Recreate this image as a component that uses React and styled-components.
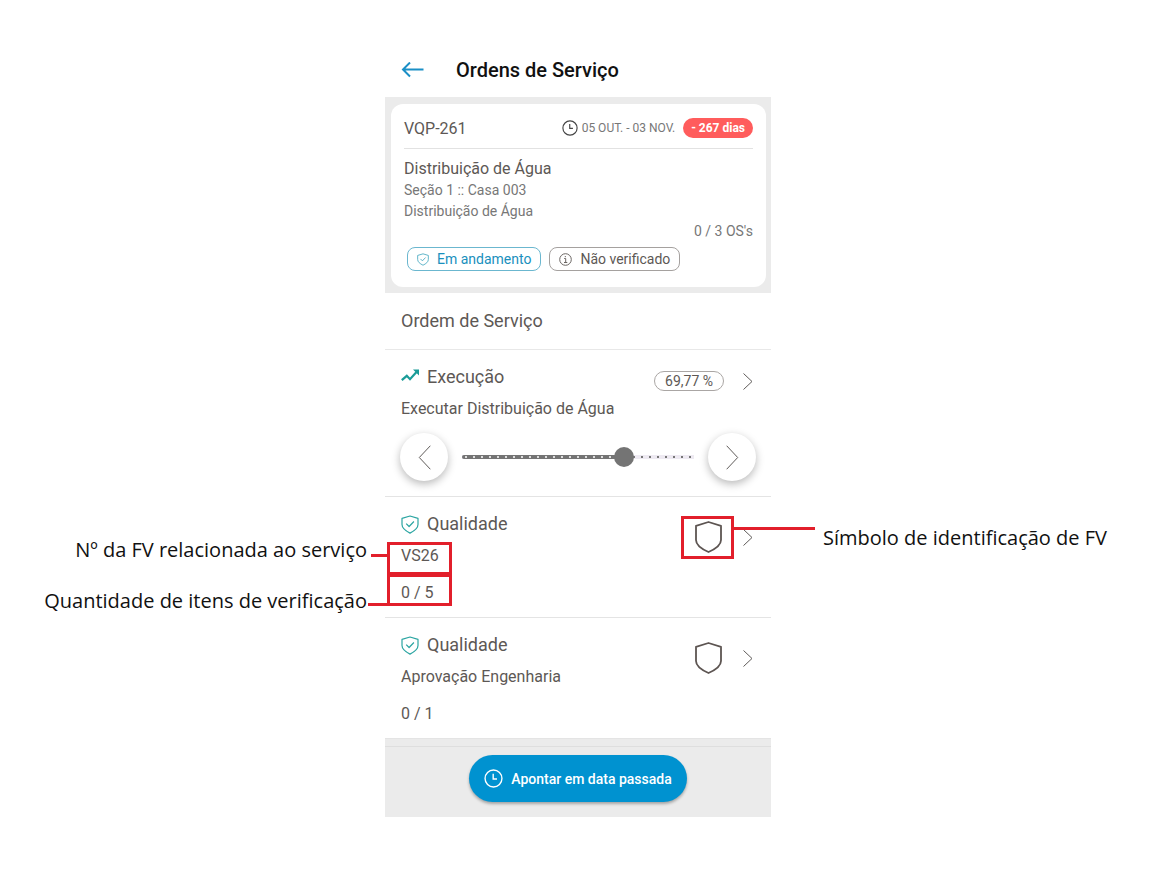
import React, { useState } from 'react';
import styled, { createGlobalStyle, css } from 'styled-components';

const GlobalStyle = createGlobalStyle`
  :root {
    --color-accent: #0092d0;
    --color-text: #5d5855;
    --color-muted: #777;
    --color-mark: #e21f2b;
    --color-shade: #ebebeb;
  }
  * {
    box-sizing: border-box;
  }
  body {
    margin: 0;
    background: white;
    color: var(--color-text);
    font-family: Roboto, sans-serif;
  }
  button {
    font-family: inherit;
    border: none;
    padding: 0;
    background: none;
    cursor: pointer;
  }
  svg {
    display: block;
    flex: none;
  }
`;

const Page = styled.div`
  display: grid;
  grid-template-columns: minmax(0, 386px);
  justify-content: center;
  padding: 43px 9px 59px 0;
`;

const Header = styled.header`
  display: flex;
  align-items: center;
  gap: 32px;
  height: 54px;
  padding: 0 16px;
`;
const Title = styled.h1`
  margin: 0;
  color: #111;
  font-size: 20px;
  font-weight: 500;
`;

const Summary = styled.section`
  background: var(--color-shade);
  padding: 7px 5px 6px 6px;
`;
const Card = styled.div`
  background: white;
  border-radius: 12px;
  padding: 4px 13px 16px;
`;
const CardHead = styled.div`
  display: flex;
  align-items: center;
  height: 41px;
  margin-bottom: 9px;
  border-bottom: 1px solid #e2e2e2;
`;
const Code = styled.span`
  flex: 1;
  font-size: 16px;
`;
const Period = styled.span`
  display: flex;
  align-items: center;
  gap: 4px;
  color: var(--color-muted);
  font-size: 12px;
`;
const Late = styled.span`
  margin-left: 8px;
  padding: 0 8px;
  border-radius: 10px;
  background: #ff5c5c;
  color: white;
  font-size: 12px;
  font-weight: 700;
  line-height: 20px;
`;
const Service = styled.h2`
  margin: 0;
  font-size: 16px;
  font-weight: 400;
  line-height: 22px;
`;
const Place = styled.p`
  margin: 0;
  color: var(--color-muted);
  font-size: 14px;
  line-height: 21px;
`;
const Total = styled.p`
  margin: 0;
  color: var(--color-muted);
  font-size: 14px;
  line-height: 18px;
  text-align: right;
`;
const Tags = styled.div`
  display: flex;
  gap: 8px;
  margin: 7px 3px 0;
`;
const Tag = styled.span`
  display: flex;
  align-items: center;
  gap: 8px;
  height: 24px;
  padding: 0 9px;
  border: 1px solid ${props => (props.$active ? '#6bb7cf' : '#a5a19f')};
  border-radius: 8px;
  color: ${props => (props.$active ? '#1990bd' : 'var(--color-text)')};
  font-size: 14px;
`;

const GroupTitle = styled.h2`
  margin: 0;
  padding: 0 16px;
  border-bottom: 1px solid #e8e8e8;
  font-size: 18px;
  font-weight: 400;
  line-height: 56px;
`;
const Item = styled.section`
  display: grid;
  grid-template-columns: 1fr auto;
  padding: 16px 16px 12px;
  border-bottom: 1px solid #e4e4e4;
`;
const ItemTitle = styled.h3`
  display: flex;
  align-items: center;
  gap: 8px;
  margin: 0;
  font-size: 18px;
  font-weight: 400;
  line-height: 22px;
`;
const Line = styled.p`
  margin: ${props => (props.$count ? '13px' : '9px')} 0 0;
  font-size: 16px;
  line-height: 24px;
`;
const Side = styled.div`
  display: flex;
  align-items: center;
  align-self: start;
  gap: ${props => props.$gap};
  height: ${props => props.$height};
  padding-right: 2px;
`;
const Percent = styled.span`
  padding: 0 10px;
  border: 1px solid #aaa6a4;
  border-radius: 10px;
  font-size: 14px;
  line-height: 18px;
`;

const Progress = styled.div`
  grid-column: 1 / -1;
  display: flex;
  align-items: center;
  gap: 14px;
  margin: 0 -1px;
  padding: 12px 0 3px;
`;
const RoundButton = styled.button`
  display: grid;
  place-items: center;
  width: 48px;
  height: 48px;
  border-radius: 50%;
  background: white;
  box-shadow: 0 3px 8px rgba(0, 0, 0, 0.28);
`;
const Track = styled.div`
  flex: 1;
  display: grid;
  align-items: center;
  background: radial-gradient(circle, #777 1px, transparent 1px) 0 center / 8px 4px repeat-x,
    linear-gradient(#eeeaf2, #eeeaf2) center / 100% 4px no-repeat;
  &::before {
    content: '';
    grid-area: 1 / 1;
    width: var(--done);
    height: 4px;
    border-radius: 2px;
    background: radial-gradient(circle, #ddd 1px, transparent 1px) 0 center / 8px 4px repeat-x #747474;
  }
`;
const Range = styled.input`
  grid-area: 1 / 1;
  appearance: none;
  width: calc(100% + 20px);
  height: 20px;
  margin: 0 -10px;
  background: none;
  cursor: pointer;
  &::-webkit-slider-thumb {
    appearance: none;
    width: 20px;
    height: 20px;
    border-radius: 50%;
    background: #747474;
  }
`;

const Marked = styled.span`
  position: relative;
  display: inline-block;
`;
const Frame = styled.span`
  position: absolute;
  border: 3px solid var(--color-mark);
  ${props => props.$kind === 'symbol' && css`
    inset: -5px -12px -6px -14px;
  `}
  ${props => props.$kind === 'number' && css`
    width: 65px;
    top: -2px;
    bottom: -7px;
    left: -14px;
  `}
  ${props => props.$kind === 'amount' && css`
    width: 65px;
    top: -7px;
    bottom: -1px;
    left: -14px;
  `}
`;
const Note = styled.span`
  position: absolute;
  display: flex;
  color: #111;
  font-family: 'Open Sans', sans-serif;
  font-size: 20px;
  line-height: 28px;
  white-space: nowrap;
  ${props => props.$kind === 'symbol' && css`
    top: 5px;
    left: 100%;
    gap: 8px;
  `}
  ${props => props.$kind === 'number' && css`
    right: 100%;
    bottom: 8px;
    gap: 4px;
  `}
  ${props => props.$kind === 'amount' && css`
    right: 100%;
    bottom: -12px;
    gap: 1px;
  `}
`;
const Lead = styled.i`
  width: ${props => props.$size};
  height: 3px;
  margin-top: ${props => props.$drop};
  background: var(--color-mark);
`;

const FooterArea = styled.footer`
  display: flow-root;
  background: var(--color-shade);
`;
const Actions = styled.div`
  display: flex;
  justify-content: center;
  margin-top: 7px;
  padding: 8px 0 15px;
  border-top: 1px solid #dedede;
`;
const MainButton = styled.button`
  display: flex;
  align-items: center;
  gap: 8px;
  height: 47px;
  padding: 0 15px;
  border-radius: 24px;
  background: var(--color-accent);
  color: white;
  font-size: 14px;
  font-weight: 500;
  box-shadow: 0 2px 3px rgba(0, 0, 0, 0.3);
`;

const BackIcon = () => (
  <svg width="23" height="16" viewBox="0 0 23 16" fill="none" stroke="#1b8fc6" strokeWidth="2">
    <path d="M22.500 7.500H2M9 .500l-7 7 7 7" />
  </svg>
);

const ClockIcon = ({ size, color }) => (
  <svg width={size} height={size} viewBox="0 0 18 18" fill="none" stroke={color} strokeWidth="1.3">
    <circle cx="9" cy="9" r="8" />
    <path d="M8.700 4.500v5h3.600" />
  </svg>
);

const CheckShield = ({ width, height, color }) => (
  <svg width={width} height={height} viewBox="0 0 18 19" fill="none" stroke={color} strokeWidth="1.2" strokeLinejoin="round">
    <path d="M9 1L17 3.400v6.100c0 3.600-3.300 6.200-8 8.600-4.700-2.400-8-5-8-8.600V3.400z" />
    <path d="M5.200 8.600l2.900 2.900 4.800-5" />
  </svg>
);

const InfoIcon = () => (
  <svg width="13" height="13" viewBox="0 0 13 13" fill="none" stroke="#6b6663">
    <circle cx="6.500" cy="6.500" r="5.800" />
    <path d="M5.200 5.500h1.500v4M5 9.500h3.300M6.300 3v1.200" />
  </svg>
);

const TrendIcon = () => (
  <svg width="18" height="16" viewBox="0 0 18 16" fill="none" stroke="#1a9c98" strokeWidth="2.200">
    <path d="M.800 11.200l5-4.400 3.200 3.400 6.500-7.200" />
    <path d="M12 .500h6v6z" fill="#1a9c98" stroke="none" />
  </svg>
);

const ShieldIcon = () => (
  <svg width="27" height="32" viewBox="0 0 27 32" fill="none" stroke="#5d5552" strokeWidth="1.800" strokeLinejoin="round">
    <path d="M13.500 1L26 4.800v14.200c0 4.800-5 8.700-12.500 12C6 27.700 1 23.800 1 19V4.800z" />
  </svg>
);

const Chevron = ({ left, width = 10, height = 17 }) => (
  <svg width={width} height={height} viewBox="0 0 10 17" fill="none" stroke="#5f5b59" preserveAspectRatio="none">
    <path d={left ? 'M9.500.500l-8.500 8 8.500 8' : 'M.500.500l8.500 8-8.500 8'} vectorEffect="non-scaling-stroke" />
  </svg>
);

function Execution() {
  const [value, setValue] = useState(69.77);
  const move = amount => setValue(Math.min(100, Math.max(0, value + amount)));

  return (
    <Item>
      <div>
        <ItemTitle><TrendIcon />Execução</ItemTitle>
        <Line>Executar Distribuição de Água</Line>
      </div>
      <Side $height="30px" $gap="19px">
        <Percent>{value.toFixed(2).replace('.', ',')} %</Percent>
        <button aria-label="Abrir execução"><Chevron /></button>
      </Side>
      <Progress>
        <RoundButton aria-label="Diminuir" onClick={() => move(-1)}>
          <Chevron left width={13} height={25} />
        </RoundButton>
        <Track style={{ '--done': `${value}%` }}>
          <Range
            type="range"
            min="0"
            max="100"
            step="any"
            aria-label="Progresso"
            value={value}
            onChange={e => setValue(Number(e.target.value))} />
        </Track>
        <RoundButton aria-label="Aumentar" onClick={() => move(1)}>
          <Chevron width={13} height={25} />
        </RoundButton>
      </Progress>
    </Item>
  );
}

function Quality({ name, count, annotated }) {
  return (
    <Item>
      <div>
        <ItemTitle><CheckShield width="18" height="19" color="#2ba5a2" />Qualidade</ItemTitle>
        <Line>
          <Marked>
            {name}
            {annotated && (
              <Frame $kind="number">
                <Note $kind="number">Nº da FV relacionada ao serviço<Lead $size="19px" $drop="18px" /></Note>
              </Frame>
            )}
          </Marked>
        </Line>
        <Line $count>
          <Marked>
            {count}
            {annotated && (
              <Frame $kind="amount">
                <Note $kind="amount">Quantidade de itens de verificação<Lead $size="22px" $drop="16px" /></Note>
              </Frame>
            )}
          </Marked>
        </Line>
      </div>
      <Side $height="48px" $gap="21px">
        <Marked>
          <ShieldIcon />
          {annotated && (
            <Frame $kind="symbol">
              <Note $kind="symbol"><Lead $size="84px" $drop="3px" />Símbolo de identificação de FV</Note>
            </Frame>
          )}
        </Marked>
        <button aria-label={`Abrir ${name}`}><Chevron /></button>
      </Side>
    </Item>
  );
}

export default function App() {
  return (
    <>
      <GlobalStyle />
      <Page>
        <Header>
          <button aria-label="Voltar"><BackIcon /></button>
          <Title>Ordens de Serviço</Title>
        </Header>
        <main>
          <Summary>
            <Card>
              <CardHead>
                <Code>VQP-261</Code>
                <Period><ClockIcon size={16} color="#444" />05 OUT. - 03 NOV.</Period>
                <Late>- 267 dias</Late>
              </CardHead>
              <Service>Distribuição de Água</Service>
              <Place>Seção 1 :: Casa 003</Place>
              <Place>Distribuição de Água</Place>
              <Total>0 / 3 OS's</Total>
              <Tags>
                <Tag $active><CheckShield width="12" height="13" color="#3aa3bd" />Em andamento</Tag>
                <Tag><InfoIcon />Não verificado</Tag>
              </Tags>
            </Card>
          </Summary>
          <GroupTitle>Ordem de Serviço</GroupTitle>
          <Execution />
          <Quality name="VS26" count="0 / 5" annotated />
          <Quality name="Aprovação Engenharia" count="0 / 1" />
        </main>
        <FooterArea>
          <Actions>
            <MainButton><ClockIcon size={19} color="white" />Apontar em data passada</MainButton>
          </Actions>
        </FooterArea>
      </Page>
    </>
  );
}
